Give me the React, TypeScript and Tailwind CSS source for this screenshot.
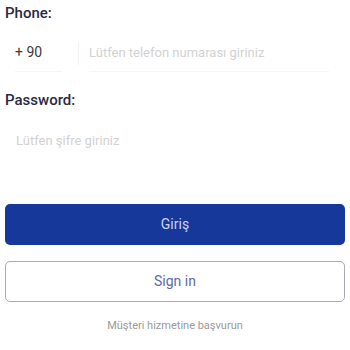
import React from "react";

export default function App() {
  return (
    <div className="w-[350px] h-[350px] bg-white font-['Roboto',sans-serif] pt-[3px]">
      <div className="px-[5px] text-[15px] leading-[20px] font-medium text-[#2b2a3f]">
        Phone:
      </div>
      <div className="flex items-center h-[38px] mt-[11px]">
        <div className="w-[78px] h-full flex items-center pl-[15px] text-[14px] text-[#3a3a3a]">
          <span className="border-b border-[#f6f6f6] h-full flex items-center pr-[20px]">
            +&nbsp;90
          </span>
        </div>
        <div className="w-px h-[24px] bg-[#f3f3f3]" />
        <input
          className="ml-[10px] w-[240px] h-full outline-none text-[13px] placeholder:text-[#d2d2d2] border-b border-[#f6f6f6]"
          placeholder="Lütfen telefon numarası giriniz"
        />
      </div>
      <div className="px-[5px] mt-[18px] text-[15px] leading-[20px] font-medium text-[#2b2a3f]">
        Password:
      </div>
      <input
        type="password"
        className="block mx-[5px] mt-[18px] pl-[11px] w-[338px] h-[24px] outline-none text-[13px] placeholder:text-[#d2d2d2]"
        placeholder="Lütfen şifre giriniz"
      />
      <div className="mx-[5px] mt-[52px] flex flex-col gap-[16px]">
        <button className="h-[41px] w-full rounded-[5px] bg-[#17389b] text-[#c9d2f2] text-[14px]">
          Giriş
        </button>
        <button className="h-[41px] w-full rounded-[5px] border border-[#a9aab8] bg-white text-[#5d6ba3] text-[14px]">
          Sign in
        </button>
      </div>
      <div className="mt-[16px] text-center text-[11px] text-[#9a9a9a]">
        Müşteri hizmetine başvurun
      </div>
    </div>
  );
}
